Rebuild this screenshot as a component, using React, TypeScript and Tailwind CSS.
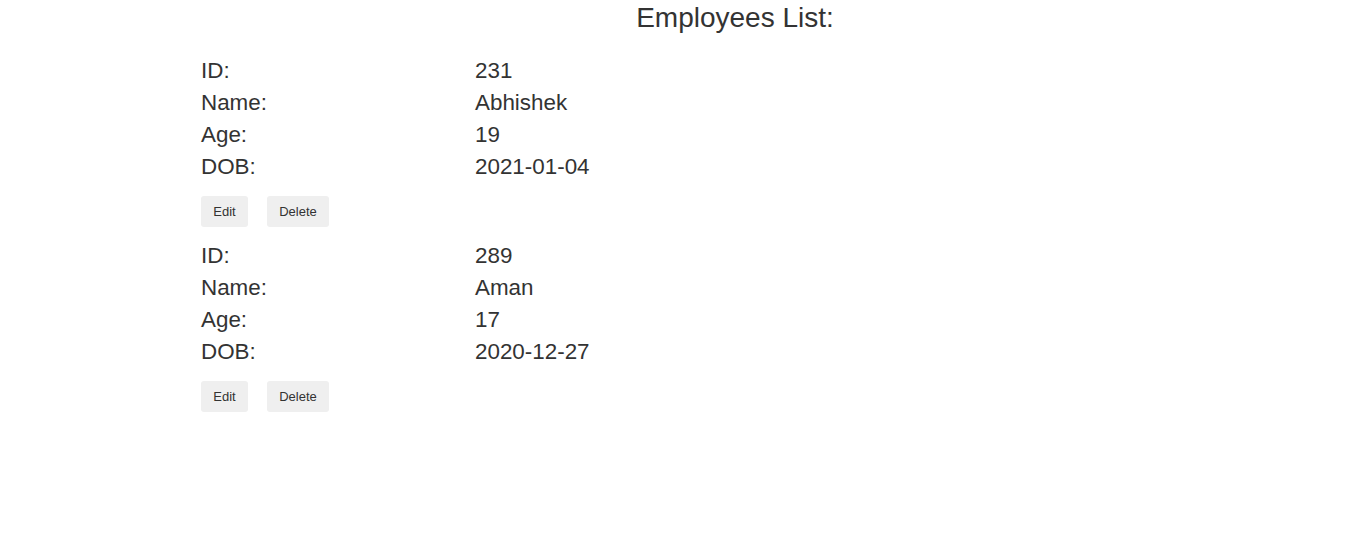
const employees = [
  { id: 231, name: "Abhishek", age: 19, dob: "2021-01-04" },
  { id: 289, name: "Aman", age: 17, dob: "2020-12-27" },
]

function Row({ label, value }: { label: string; value: string | number }) {
  return (
    <div className="flex h-[32px] items-center">
      <div className="w-[274px]">{label}</div>
      <div>{value}</div>
    </div>
  )
}

export default function App() {
  return (
    <div className="min-h-screen bg-white text-[#333333] font-['Liberation_Sans',Arial,sans-serif]">
      <div className="ml-[201px] w-[1068px] pt-[1px]">
        <h1 className="text-center text-[28px] leading-[34px] font-normal">Employees List:</h1>
        <div className="mt-[20px] text-[22.4px]">
          {employees.map((e) => (
            <div key={e.id} className="mb-[13px]">
              <Row label="ID:" value={e.id} />
              <Row label="Name:" value={e.name} />
              <Row label="Age:" value={e.age} />
              <Row label="DOB:" value={e.dob} />
              <div className="mt-[13px] flex gap-[19px]">
                <button className="h-[31px] w-[47px] rounded-[3px] bg-[#efefef] text-[13px] text-[#333333]">
                  Edit
                </button>
                <button className="h-[31px] w-[62px] rounded-[3px] bg-[#efefef] text-[13px] text-[#333333]">
                  Delete
                </button>
              </div>
            </div>
          ))}
        </div>
      </div>
    </div>
  )
}
